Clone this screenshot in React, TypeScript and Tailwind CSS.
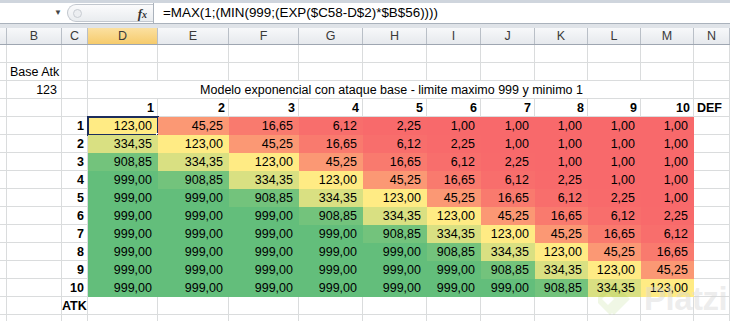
import { Fragment } from "react";

const cols = ["A", "B", "C", "D", "E", "F", "G", "H", "I", "J", "K", "L", "M", "N"];
const gridCols =
  "grid grid-cols-[7px_55px_26px_70px_71px_70px_64px_64px_54px_54px_53px_53px_53px_1fr]";

// valor y color segun la diferencia ATK - DEF
const byDiff: Record<number, { text: string; fill: string }> = {
  [-5]: { text: "1,00", fill: "bg-[#f8696b]" },
  [-4]: { text: "2,25", fill: "bg-[#f86a6b]" },
  [-3]: { text: "6,12", fill: "bg-[#f86e6c]" },
  [-2]: { text: "16,65", fill: "bg-[#f97a6e]" },
  [-1]: { text: "45,25", fill: "bg-[#fb9874]" },
  0: { text: "123,00", fill: "bg-[#ffeb84]" },
  1: { text: "334,35", fill: "bg-[#d9e082]" },
  2: { text: "908,85", fill: "bg-[#73c37c]" },
  3: { text: "999,00", fill: "bg-[#63be7b]" },
};

function cellFor(atk: number, def: number) {
  const d = Math.max(-5, Math.min(3, atk - def));
  return byDiff[d];
}

const line = "border-r border-b border-[#dadcdd]";
const nums = [1, 2, 3, 4, 5, 6, 7, 8, 9, 10];

function Cell({
  children,
  className = "",
}: {
  children?: React.ReactNode;
  className?: string;
}) {
  return (
    <div className={`h-[18px] leading-[19px] whitespace-nowrap overflow-visible ${className}`}>
      {children}
    </div>
  );
}

function EmptyRow() {
  return (
    <>
      {cols.map((c) => (
        <Cell key={c} className={line} />
      ))}
    </>
  );
}

function FormulaBar() {
  return (
    <div className="h-[28px] flex flex-col bg-[#dfe3e8]">
      <div className="h-[3px] bg-[#cfd5dd]" />
      <div className="h-[21px] flex bg-white border-b border-[#aab2bc]">
        <div className="w-[67px] flex items-center justify-end pr-[5px]">
          <span className="text-[8px] text-[#444] leading-none">▼</span>
        </div>
        <div className="w-[86px] flex items-center my-[1px] rounded-l-full border border-r-0 border-[#c2c7ce] bg-gradient-to-b from-[#fbfbfc] to-[#e9ecef]">
          <div className="ml-[5px] w-[9px] h-[9px] rounded-full border border-[#c8ccd2] bg-[#eceef1]" />
          <span className="ml-auto mr-[6px] font-['Liberation_Serif',serif] italic font-bold text-[13px] text-[#333] leading-none">
            f<span className="text-[10px]">x</span>
          </span>
        </div>
        <div className="flex-1 border-l border-[#aab2bc] pl-[9px] text-[13.4px] leading-[20px] text-black">
          =MAX(1;(MIN(999;(EXP($C58-D$2)*$B$56))))
        </div>
      </div>
    </div>
  );
}

function Headers() {
  return (
    <div className={`${gridCols} h-[17px] border-b border-[#9ea6b1]`}>
      {cols.map((c) => (
        <div
          key={c}
          className={`h-[16px] leading-[17px] text-center text-[12.5px] text-[#3a3a3a] border-r border-[#b9bfc7] ${
            c === "D"
              ? "bg-gradient-to-b from-[#fbe0a0] to-[#f6cb6b]"
              : "bg-gradient-to-b from-[#f7f8fa] to-[#e6e9ed]"
          }`}
        >
          {c === "A" ? "" : c}
        </div>
      ))}
    </div>
  );
}

function PlatziMark() {
  return (
    <div className="pointer-events-none absolute left-[596px] top-[281px] flex items-start gap-[12px]">
      <svg width="36" height="44" viewBox="0 0 36 44" className="opacity-[0.13]">
        <path
          d="M18 2 L34 18 L18 34 L10 26 L18 18 L12 12 L6 18 L18 30 L14 34 L2 22 L2 16 Z"
          fill="#8fc63f"
        />
      </svg>
      <span className="mt-[-2px] text-[33px] font-bold tracking-[-0.5px] text-[#d6d6d6]/45 leading-[40px]">
        Platzi
      </span>
    </div>
  );
}

export default function App() {
  return (
    <div className="relative w-[730px] h-[321px] overflow-hidden bg-white font-['Liberation_Sans',Arial,sans-serif] text-[12.5px] text-black">
      <FormulaBar />
      <Headers />
      <div className={gridCols}>
        <EmptyRow />

        {/* Base Atk */}
        <Cell className={line} />
        <Cell className={`${line} pl-[3px]`}>Base Atk</Cell>
        {cols.slice(2).map((c) => (
          <Cell key={c} className={line} />
        ))}

        {/* 123 + titulo */}
        <Cell className={line} />
        <Cell className={`${line} text-right pr-[4px]`}>123</Cell>
        <Cell className={line} />
        <Cell className={`${line} col-span-10 text-center pl-[2px]`}>
          Modelo exponencial con ataque base - limite maximo 999 y minimo 1
        </Cell>
        <Cell className={line} />

        {/* encabezado DEF */}
        <Cell className={line} />
        <Cell className={line} />
        <Cell className={line} />
        {nums.map((n) => (
          <Cell key={n} className={`${line} text-right pr-[3px] font-bold`}>
            {n}
          </Cell>
        ))}
        <Cell className={`${line} pl-[3px] font-bold`}>DEF</Cell>

        {nums.map((atk) => (
          <Fragment key={atk}>
            <Cell className={line} />
            <Cell className={line} />
            <Cell className={`${line} text-right pr-[3px] font-bold`}>{atk}</Cell>
            {nums.map((def) => {
              const v = cellFor(atk, def);
              const selected = atk === 1 && def === 1;
              return (
                <Cell key={def} className={`relative text-right pr-[6px] ${v.fill}`}>
                  {v.text}
                  {selected && (
                    <>
                      <div className="absolute left-[-1px] top-[-1px] right-[-1px] bottom-[-1px] border-2 border-[#1c2d5c]" />
                      <div className="absolute right-[-4px] bottom-[-4px] w-[6px] h-[6px] bg-[#1c2d5c] border border-white" />
                    </>
                  )}
                </Cell>
              );
            })}
            <Cell className={line} />
          </Fragment>
        ))}

        {/* ATK */}
        <Cell className={line} />
        <Cell className={line} />
        <Cell className={`${line} text-right pr-[3px] font-bold`}>ATK</Cell>
        {cols.slice(3).map((c) => (
          <Cell key={c} className={line} />
        ))}

        <EmptyRow />
      </div>
      <PlatziMark />
    </div>
  );
}
